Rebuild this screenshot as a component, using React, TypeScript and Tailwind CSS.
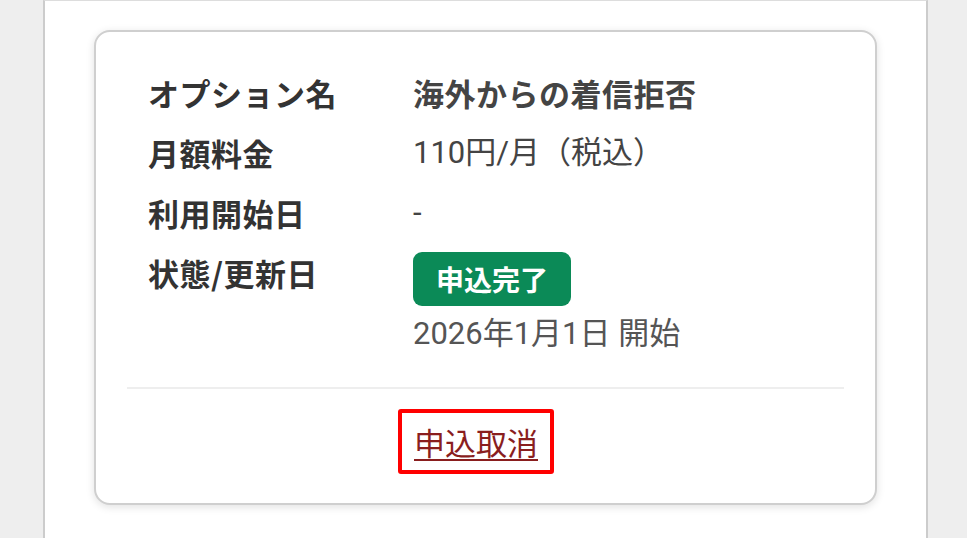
export default function App() {
  const font = "font-['Noto_Sans_CJK_JP','Noto_Sans',sans-serif]";
  const valueFont = "font-['Roboto','Noto_Sans_CJK_JP',sans-serif]";
  const rows = [
    { label: "オプション名", value: "海外からの着信拒否", bold: true },
    { label: "月額料金", value: "110円/月（税込）" },
    { label: "利用開始日", value: "-" },
  ];

  return (
    <div className={`flex min-h-[538px] w-full bg-[#eeeeee] ${font}`}>
      <div className="ml-[43px] mr-[39px] flex-1 border-x-2 border-t border-x-[#cccccc] border-t-[#dddddd] bg-white px-[49px] pt-[29px] pb-[33px]">
        {/* Option card */}
        <div className="rounded-[16px] border-2 border-[#cfcfcf] bg-white pt-[31px] pb-[29px] shadow-[0_2px_8px_rgba(0,0,0,0.12)]">
          <div className="pl-[52px]">
            {rows.map((r) => (
              <div key={r.label} className="flex leading-[60px]">
                <div className="w-[265px] text-[31px] font-bold tracking-[0.5px] text-[#333333]">{r.label}</div>
                <div className={`text-[31px] ${r.bold ? `${font} font-bold tracking-[0.5px]` : valueFont} text-[#444444]`}>{r.value}</div>
              </div>
            ))}
            <div className="flex">
              <div className="w-[265px] text-[31px] font-bold leading-[60px] tracking-[0.5px] text-[#333333]">状態/更新日</div>
              <div className="flex flex-col items-start">
                <span className="mt-[9px] flex h-[54px] items-center rounded-[9px] bg-[#0b8a57] px-[23px] text-[28px] font-bold text-white">
                  申込完了
                </span>
                <span className={`mt-[5px] text-[31px] leading-[46px] text-[#555555] ${valueFont}`}>2026年1月1日 開始</span>
              </div>
            </div>
          </div>

          <div className="mx-[31px] mt-[30px] h-[2px] bg-[#eeeeee]" />

          <div className="mt-[20px] flex justify-center pr-[19px]">
            <a
              href="#"
              className="rounded-[3px] border-4 border-[#ff0000] px-[12px] text-[31px] leading-[57px] text-[#8a1e1e] underline decoration-2 underline-offset-[4px]"
            >
              申込取消
            </a>
          </div>
        </div>
      </div>
    </div>
  );
}
